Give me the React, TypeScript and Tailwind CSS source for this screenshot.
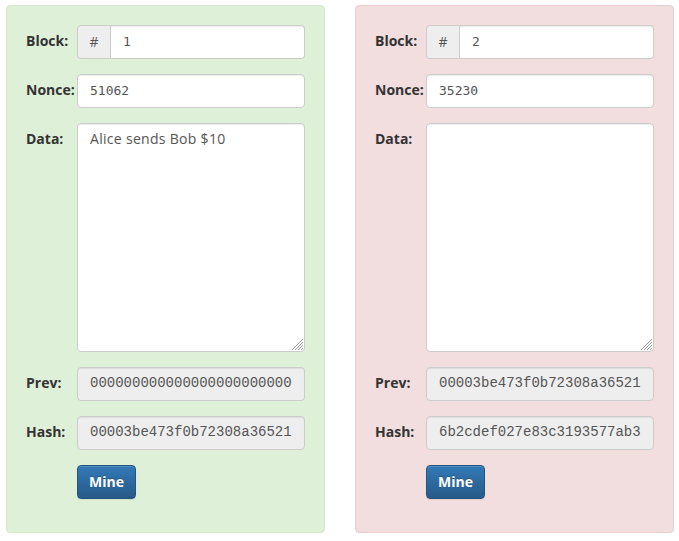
import React from "react";

type Block = {
  num: string;
  nonce: string;
  data: string;
  prev: string;
  hash: string;
  ok: boolean;
};

const blocks: Block[] = [
  {
    num: "1",
    nonce: "51062",
    data: "Alice sends Bob $10",
    prev: "0000000000000000000000000000000000000000000000000000000000000000",
    hash: "00003be473f0b72308a36521c8f1e2b1d0d1a4a0a5b9a6e2f7c3d4e5f6a7b8c9",
    ok: true,
  },
  {
    num: "2",
    nonce: "35230",
    data: "",
    prev: "00003be473f0b72308a36521c8f1e2b1d0d1a4a0a5b9a6e2f7c3d4e5f6a7b8c9",
    hash: "6b2cdef027e83c3193577ab3e41a9c0d8f2b6e5a7c1d3f9b0e4a2c6d8f1b3e5a",
    ok: false,
  },
];

const label =
  "w-[51px] shrink-0 text-[14px] leading-[20px] font-bold text-[#333] pt-[6px]";
const input =
  "h-[34px] w-full rounded-[4px] border border-[#ccc] px-[12px] pb-[2px] text-[13px] text-[#555] shadow-[inset_0_1px_1px_rgba(0,0,0,0.075)] outline-none";

// safari-like resize grip drawn over the textarea corner
function Grip() {
  return (
    <svg
      width="12"
      height="12"
      viewBox="0 0 12 12"
      className="absolute right-[2px] bottom-[2px] pointer-events-none"
    >
      <g stroke="#9a9a9a" strokeWidth="1">
        <line x1="1" y1="12" x2="12" y2="1" />
        <line x1="4" y1="12" x2="12" y2="4" />
        <line x1="7" y1="12" x2="12" y2="7" />
        <line x1="10" y1="12" x2="12" y2="10" />
      </g>
    </svg>
  );
}

function BlockCard({ b }: { b: Block }) {
  return (
    <div
      className={`w-[319px] h-[528px] rounded-[4px] border pt-[19px] pl-[19px] pr-[19px] ${
        b.ok ? "bg-[#dff0d8] border-[#d6e9c6]" : "bg-[#f2dede] border-[#ebccd1]"
      }`}
    >
      <div className="flex flex-col gap-[15px]">
        {/* Block */}
        <div className="flex">
          <label className={label}>Block:</label>
          <div className="flex flex-1 h-[34px]">
            <span className="w-[34px] shrink-0 flex items-center justify-center pb-[2px] rounded-l-[4px] border border-[#ccc] bg-[#eee] text-[14px] text-[#555]">
              #
            </span>
            <input
              readOnly
              value={b.num}
              className={`${input} rounded-l-none border-l-0 bg-white font-['DejaVu_Sans_Mono',monospace]`}
            />
          </div>
        </div>

        {/* Nonce */}
        <div className="flex">
          <label className={label}>Nonce:</label>
          <input
            readOnly
            value={b.nonce}
            className={`${input} bg-white font-['DejaVu_Sans_Mono',monospace]`}
          />
        </div>

        {/* Data */}
        <div className="flex">
          <label className={label}>Data:</label>
          <div className="relative flex-1">
            <textarea
              readOnly
              value={b.data}
              className="block h-[229px] w-full rounded-[4px] border border-[#ccc] bg-white px-[12px] pt-[5px] text-[14px] leading-[20px] tracking-[0.3px] text-[#555] shadow-[inset_0_1px_1px_rgba(0,0,0,0.075)] outline-none resize-none"
            />
            <Grip />
          </div>
        </div>

        {/* Prev */}
        <div className="flex">
          <label className={label}>Prev:</label>
          <input
            readOnly
            value={b.prev}
            className={`${input} bg-[#eee] text-[14px] font-['Liberation_Mono',monospace]`}
          />
        </div>

        {/* Hash */}
        <div className="flex">
          <label className={label}>Hash:</label>
          <input
            readOnly
            value={b.hash}
            className={`${input} bg-[#eee] text-[14px] font-['Liberation_Mono',monospace]`}
          />
        </div>

        {/* Mine */}
        <div className="flex">
          <div className="w-[51px] shrink-0" />
          <button className="h-[34px] w-[59px] pb-[2px] rounded-[4px] border border-[#245580] bg-gradient-to-b from-[#337ab7] to-[#265a88] text-[14px] font-bold text-white shadow-[inset_0_1px_0_rgba(255,255,255,0.15),0_1px_1px_rgba(0,0,0,0.075)] [text-shadow:0_-1px_0_rgba(0,0,0,0.2)]">
            Mine
          </button>
        </div>
      </div>
    </div>
  );
}

export default function App() {
  return (
    <div className="min-h-screen bg-white pt-[5px] pl-[6px] font-['Open_Sans',sans-serif]">
      <div className="flex gap-[30px]">
        {blocks.map((b) => (
          <BlockCard key={b.num} b={b} />
        ))}
      </div>
    </div>
  );
}
